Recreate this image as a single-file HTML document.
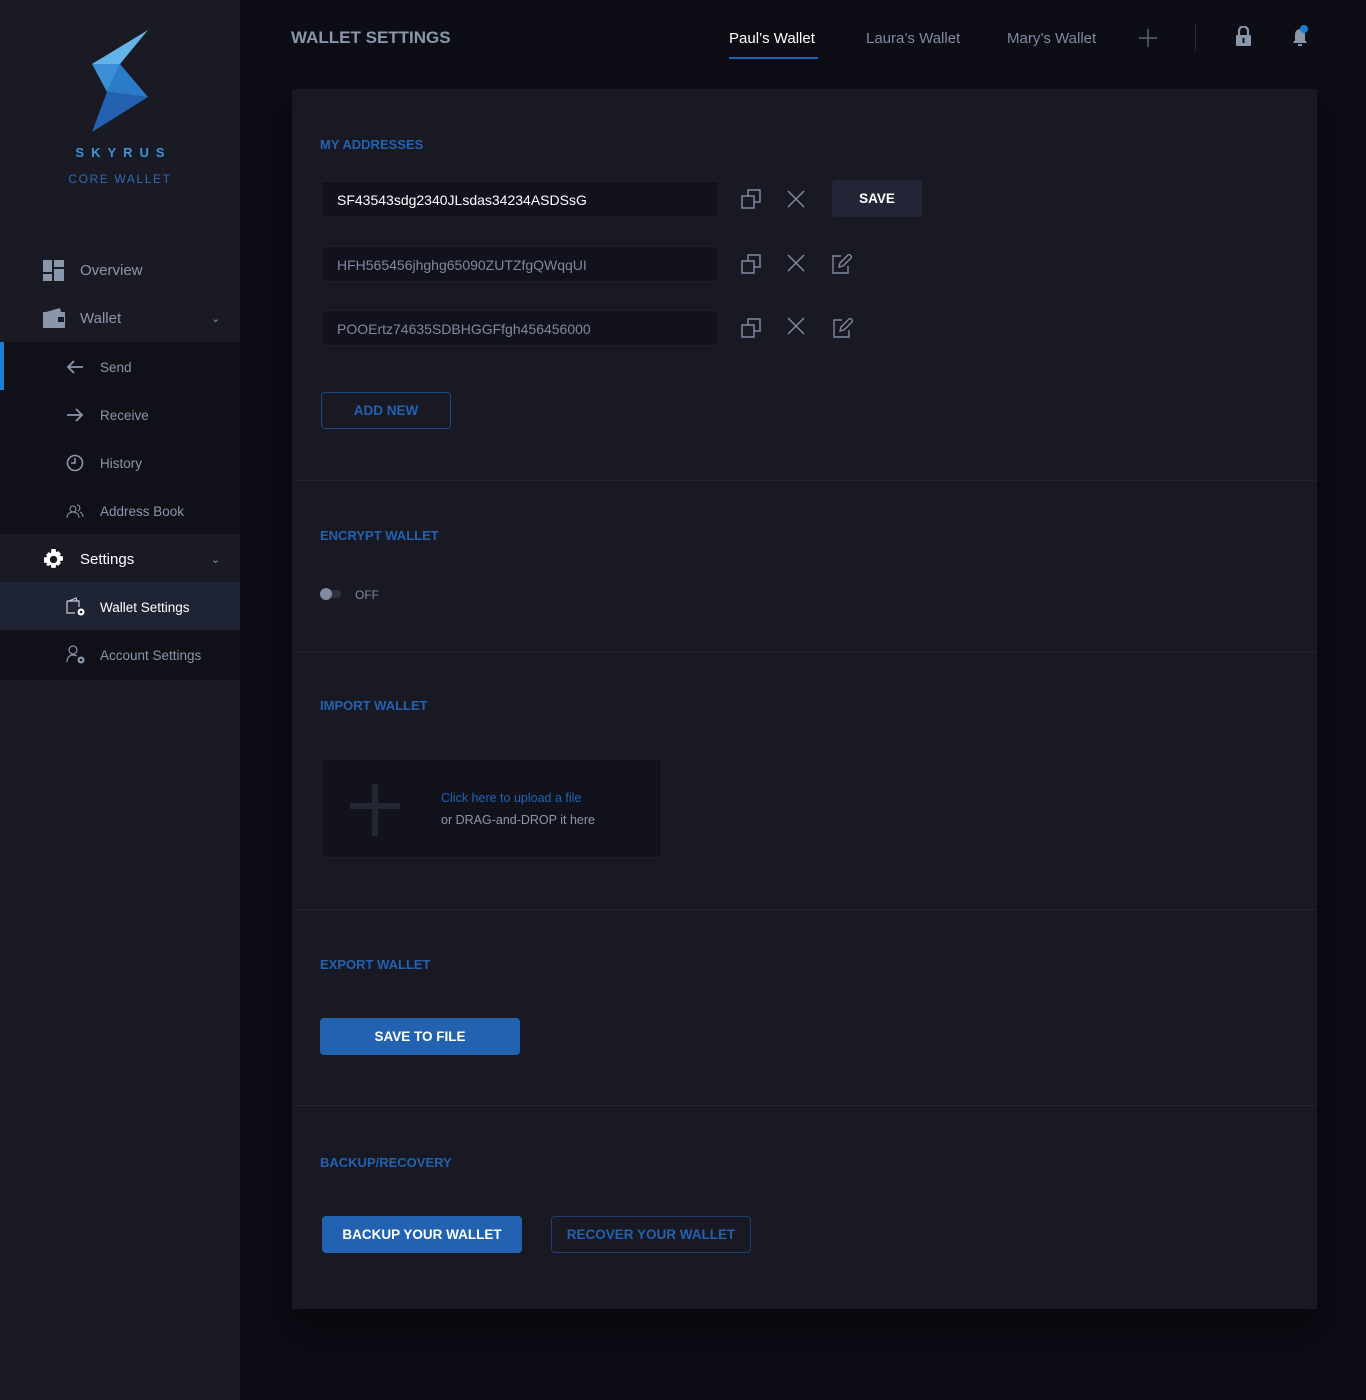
<!DOCTYPE html>
<html><head><meta charset="utf-8"><style>
*{margin:0;padding:0;box-sizing:border-box}
body{width:1366px;height:1400px;background:#0c0d15;font-family:"Liberation Sans",sans-serif;position:relative;overflow:hidden}
.sb{position:absolute;left:0;top:0;width:240px;height:1400px;background:#191a24}
.a{position:absolute}
.nav{position:absolute;left:0;width:240px;height:48px;display:flex;align-items:center}
.nav .t{position:absolute;left:80px;font-size:15px;color:#8a97ab}
.sub .t{left:100px;font-size:13.5px}
.h{font-size:13px;font-weight:bold;color:#2262b0;position:absolute;left:320px}
.inp{position:absolute;left:321px;width:398px;height:36px;background:#11121b;border:1px solid #1c1e29;border-radius:4px;font-size:14px;color:#7d8aa0;padding:10px 15px}
.btn{position:absolute;height:37px;border-radius:4px;font-size:13.5px;font-weight:bold;display:flex;align-items:center;justify-content:center}
.line{position:absolute;left:292px;width:1025px;height:1px;background:#21232e}
</style></head><body>
<div class="sb">
<svg class="a" style="left:90px;top:28px" width="60" height="106" viewBox="0 0 60 106">
<polygon points="58,2 2,36 30,36" fill="#64b3e8"/>
<polygon points="2,36 30,36 17,64" fill="#3b8fd4"/>
<polygon points="30,36 58,69 17,64" fill="#2a7cc8"/>
<polygon points="17,64 58,69 2,104" fill="#2262b0"/>
</svg>
<div class="a" style="left:66px;top:145px;width:108px;text-align:center;font-size:13px;font-weight:bold;letter-spacing:7px;color:#3b95dc;padding-left:7px">SKYRUS</div>
<div class="a" style="left:60px;top:172px;width:120px;text-align:center;font-size:12px;letter-spacing:1.6px;color:#2c6bb5">CORE WALLET</div>
<div class="nav" style="top:246px"><svg class="a" style="left:43px" width="21" height="21"><rect x="0" y="0" width="9" height="12" fill="#8a97ab"/><rect x="11" y="0" width="10" height="7" fill="#8a97ab"/><rect x="0" y="14" width="9" height="7" fill="#8a97ab"/><rect x="11" y="9" width="10" height="12" fill="#8a97ab"/></svg><span class="t">Overview</span></div>
<div class="nav" style="top:294px"><svg class="a" style="left:43px" width="22" height="20"><rect x="0" y="4" width="22" height="16" rx="1" fill="#8a97ab"/><path d="M3 4 L17 0 L18 4" fill="#8a97ab"/><rect x="15" y="9" width="6" height="5" fill="#191a24"/></svg><span class="t">Wallet</span><span class="a" style="left:211px;color:#8a97ab;font-size:11px">&#8964;</span></div>
<div class="a" style="left:0;top:342px;width:240px;height:192px;background:#0f1018"></div>
<div class="a" style="left:0;top:342px;width:4px;height:48px;background:#1e7ed0"></div>
<div class="nav sub" style="top:343px"><svg class="a" style="left:66px" width="18" height="14"><path d="M17 7H2M8 1L2 7l6 6" stroke="#8a97ab" stroke-width="1.8" fill="none"/></svg><span class="t">Send</span></div>
<div class="nav sub" style="top:391px"><svg class="a" style="left:66px" width="18" height="14"><path d="M1 7h15M10 1l6 6-6 6" stroke="#8a97ab" stroke-width="1.8" fill="none"/></svg><span class="t">Receive</span></div>
<div class="nav sub" style="top:439px"><svg class="a" style="left:66px" width="18" height="18"><circle cx="9" cy="9" r="7.5" stroke="#8a97ab" stroke-width="1.6" fill="none"/><path d="M9 4v5H5" stroke="#8a97ab" stroke-width="1.6" fill="none"/></svg><span class="t">History</span></div>
<div class="nav sub" style="top:487px"><svg class="a" style="left:66px" width="18" height="16"><circle cx="7" cy="6" r="3" stroke="#8a97ab" fill="none"/><path d="M1 15c0-4 3-6 6-6s6 2 6 6M11 2c3 0 4 4 1 6M14 9c2 1 3 3 3 5" stroke="#8a97ab" fill="none"/></svg><span class="t">Address Book</span></div>
<div class="nav" style="top:535px"><svg class="a" style="left:43px" width="21" height="21" viewBox="0 0 20 20"><path d="M8 0h4l.5 3 2-1 2.5 2.5-1 2 3 .5v4l-3 .5 1 2-2.5 2.5-2-1-.5 3H8l-.5-3-2 1L3 15.5l1-2-3-.5V8l3-.5-1-2L5.5 3l2 1z" fill="#fff"/><circle cx="10" cy="10" r="3.5" fill="#191a24"/></svg><span class="t" style="color:#fff">Settings</span><span class="a" style="left:211px;color:#8a97ab;font-size:11px">&#8964;</span></div>
<div class="a" style="left:0;top:582px;width:240px;height:48px;background:#1f2435"></div>
<div class="a" style="left:0;top:630px;width:240px;height:50px;background:#0f1018"></div>
<div class="nav sub" style="top:583px"><svg class="a" style="left:66px" width="20" height="20"><path d="M1 4h12v6M1 4v12h8M3 4l7-3 1 3" stroke="#ccd" stroke-width="1.2" fill="none"/><circle cx="15" cy="15" r="3.5" fill="#fff"/><circle cx="15" cy="15" r="1.3" fill="#1f2435"/></svg><span class="t" style="color:#fff">Wallet Settings</span></div>
<div class="nav sub" style="top:631px"><svg class="a" style="left:66px" width="20" height="20"><circle cx="7" cy="5" r="4" stroke="#8a97ab" stroke-width="1.2" fill="none"/><path d="M1 17c0-5 3-7 6-7 2 0 3 .5 4 1" stroke="#8a97ab" stroke-width="1.2" fill="none"/><circle cx="15" cy="15" r="3.5" fill="#8a97ab"/><circle cx="15" cy="15" r="1.3" fill="#0f1018"/></svg><span class="t">Account Settings</span></div>
</div>

<div class="a" style="left:291px;top:28px;font-size:17px;font-weight:bold;color:#8a97ab">WALLET SETTINGS</div>
<div class="a" style="left:729px;top:30px;font-size:15px;color:#fff">Paul’s Wallet</div>
<div class="a" style="left:729px;top:57px;width:89px;height:2px;background:#2262b0"></div>
<div class="a" style="left:866px;top:30px;font-size:15px;color:#7d8aa0">Laura’s Wallet</div>
<div class="a" style="left:1007px;top:30px;font-size:15px;color:#7d8aa0">Mary’s Wallet</div>
<svg class="a" style="left:1138px;top:28px" width="20" height="20"><path d="M10 1v18M1 10h18" stroke="#5a6375" stroke-width="1.5"/></svg>
<div class="a" style="left:1195px;top:24px;width:1px;height:27px;background:#2a2d38"></div>
<svg class="a" style="left:1235px;top:26px" width="17" height="21"><path d="M4 9V5a4.5 4.5 0 0 1 9 0v4" stroke="#8a97ab" stroke-width="2.2" fill="none"/><rect x="1" y="9" width="15" height="11" rx="1" fill="#8a97ab"/><rect x="7.5" y="12" width="2" height="5" fill="#0c0d15"/></svg>
<svg class="a" style="left:1290px;top:24px" width="20" height="24"><path d="M3 19h14l-2-3V10a5 5 0 0 0-10 0v6z" fill="#8a97ab"/><rect x="8" y="20" width="4" height="2" fill="#8a97ab"/><circle cx="14" cy="5" r="4" fill="#1e7ed0"/></svg>

<div class="a" style="left:292px;top:89px;width:1025px;height:1220px;background:#181923;box-shadow:0 20px 40px rgba(0,0,0,.4)"></div>

<div class="h" style="top:137px">MY ADDRESSES</div>
<div class="inp" style="top:181px;color:#fff">SF43543sdg2340JLsdas34234ASDSsG</div>
<div class="inp" style="top:246px">HFH565456jhghg65090ZUTZfgQWqqUI</div>
<div class="inp" style="top:310px">POOErtz74635SDBHGGFfgh456456000</div>
<svg class="a" style="left:741px;top:189px" width="20" height="20"><path d="M1 7h12v12H1zM7 7V1h12v12h-6" stroke="#7d8aa0" stroke-width="1.5" fill="none"/></svg>
<svg class="a" style="left:741px;top:254px" width="20" height="20"><path d="M1 7h12v12H1zM7 7V1h12v12h-6" stroke="#7d8aa0" stroke-width="1.5" fill="none"/></svg>
<svg class="a" style="left:741px;top:318px" width="20" height="20"><path d="M1 7h12v12H1zM7 7V1h12v12h-6" stroke="#7d8aa0" stroke-width="1.5" fill="none"/></svg>
<svg class="a" style="left:787px;top:190px" width="18" height="18"><path d="M1 1l16 16M17 1L1 17" stroke="#7d8aa0" stroke-width="1.5"/></svg>
<svg class="a" style="left:787px;top:254px" width="18" height="18"><path d="M1 1l16 16M17 1L1 17" stroke="#7d8aa0" stroke-width="1.5"/></svg>
<svg class="a" style="left:787px;top:317px" width="18" height="18"><path d="M1 1l16 16M17 1L1 17" stroke="#7d8aa0" stroke-width="1.5"/></svg>
<svg class="a" style="left:832px;top:254px" width="20" height="20"><path d="M9 2H1v17h15v-7M7 13l1-4 9-9 3 3-9 9z" stroke="#7d8aa0" stroke-width="1.4" fill="none"/></svg>
<svg class="a" style="left:833px;top:318px" width="20" height="20"><path d="M9 2H1v17h15v-7M7 13l1-4 9-9 3 3-9 9z" stroke="#7d8aa0" stroke-width="1.4" fill="none"/></svg>
<div class="btn" style="left:832px;top:180px;width:90px;background:#222636;color:#fff">SAVE</div>
<div class="btn" style="left:321px;top:392px;width:130px;border:1px solid #1f4b85;color:#2262b0">ADD NEW</div>
<div class="line" style="top:480px"></div>

<div class="h" style="top:528px">ENCRYPT WALLET</div>
<div class="a" style="left:321px;top:590px;width:20px;height:8px;border-radius:4px;background:#2e3240"></div>
<div class="a" style="left:320px;top:588px;width:12px;height:12px;border-radius:6px;background:#7d8aa0"></div>
<div class="a" style="left:355px;top:588px;font-size:12px;color:#7d8aa0">OFF</div>
<div class="line" style="top:651px"></div>

<div class="h" style="top:698px">IMPORT WALLET</div>
<div class="a" style="left:321px;top:759px;width:341px;height:99px;background:#11121b;border:1px solid #1c1e29;border-radius:3px"></div>
<div class="a" style="left:350px;top:803px;width:50px;height:6px;background:#232733"></div>
<div class="a" style="left:372px;top:784px;width:6px;height:52px;background:#232733"></div>
<div class="a" style="left:441px;top:791px;font-size:12.5px;color:#2262b0">Click here to upload a file</div>
<div class="a" style="left:441px;top:813px;font-size:12.5px;color:#8a97ab">or DRAG-and-DROP it here</div>
<div class="line" style="top:909px"></div>

<div class="h" style="top:957px">EXPORT WALLET</div>
<div class="btn" style="left:320px;top:1018px;width:200px;background:#2262b0;color:#fff">SAVE TO FILE</div>
<div class="line" style="top:1105px"></div>

<div class="h" style="top:1155px">BACKUP/RECOVERY</div>
<div class="btn" style="left:322px;top:1216px;width:200px;background:#2262b0;color:#fff">BACKUP YOUR WALLET</div>
<div class="btn" style="left:551px;top:1216px;width:200px;border:1px solid #1f3f6e;color:#2262b0">RECOVER YOUR WALLET</div>
</body></html>
